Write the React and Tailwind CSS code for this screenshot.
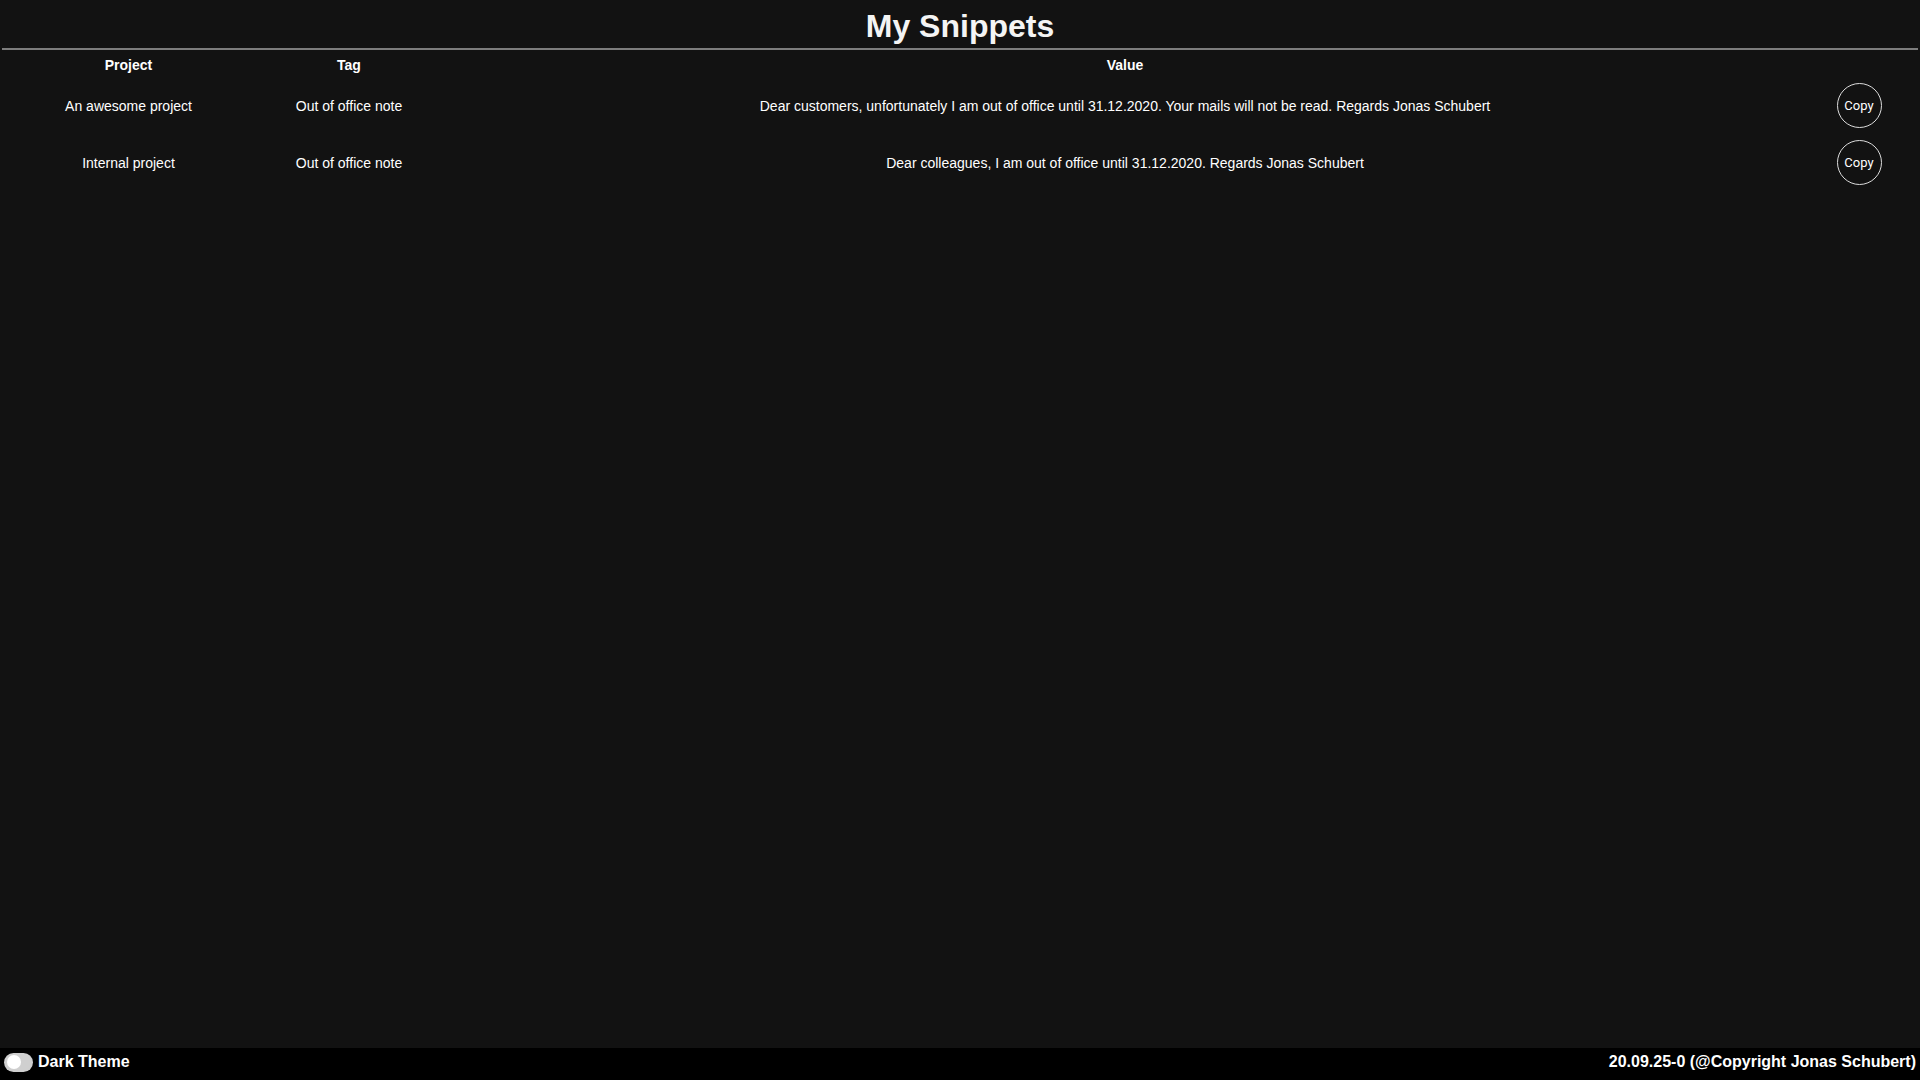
import { useState } from "react";

const snippets = [
  {
    project: "An awesome project",
    tag: "Out of office note",
    value:
      "Dear customers, unfortunately I am out of office until 31.12.2020. Your mails will not be read. Regards Jonas Schubert",
  },
  {
    project: "Internal project",
    tag: "Out of office note",
    value: "Dear colleagues, I am out of office until 31.12.2020. Regards Jonas Schubert",
  },
];

const COLS = "grid grid-cols-[253px_188px_1fr_104px]";

export default function App() {
  const [dark, setDark] = useState(true);

  return (
    <div className="h-screen flex flex-col bg-[#121212] text-white font-['Liberation_Sans',Arial,sans-serif]">
      <main className="flex-1 overflow-auto">
        <h1 className="text-center text-[32px] font-bold leading-[37px] mt-[8px] mb-[3px] text-[#f4f4f4]">
          My Snippets
        </h1>
        <div className="mx-[2px] border-t-2 border-[#7d7d7d]" />

        <div className="ml-[2px] mr-[9px]">
          <div className={`${COLS} h-[27px] pt-[7px] text-[14px] font-bold leading-[16px] text-center`}>
            <div>Project</div>
            <div>Tag</div>
            <div>Value</div>
            <div />
          </div>

          {snippets.map((s, i) => (
            <div key={i} className={`${COLS} h-[57px] items-center text-[14px] leading-[16px] text-center`}>
              <div>{s.project}</div>
              <div>{s.tag}</div>
              <div>{s.value}</div>
              <div className="flex justify-center">
                <button
                  onClick={() => navigator.clipboard?.writeText(s.value)}
                  className="w-[45px] h-[45px] rounded-full border-[1.5px] border-[#dcdcdc] bg-transparent text-[13px] text-white font-['Roboto',sans-serif]"
                >
                  Copy
                </button>
              </div>
            </div>
          ))}
        </div>
      </main>

      <footer className="h-[32px] bg-black flex items-center justify-between pb-[4px] px-[4px] text-[16px] font-bold">
        <div className="flex items-center gap-[5px]">
          <button
            onClick={() => setDark(!dark)}
            className="w-[29px] h-[19px] rounded-full bg-[#cfcfcf] flex items-center px-[3px]"
          >
            <span className="w-[14px] h-[14px] rounded-full bg-white" />
          </button>
          <span>Dark Theme</span>
        </div>
        <span>20.09.25-0 (@Copyright Jonas Schubert)</span>
      </footer>
    </div>
  );
}
